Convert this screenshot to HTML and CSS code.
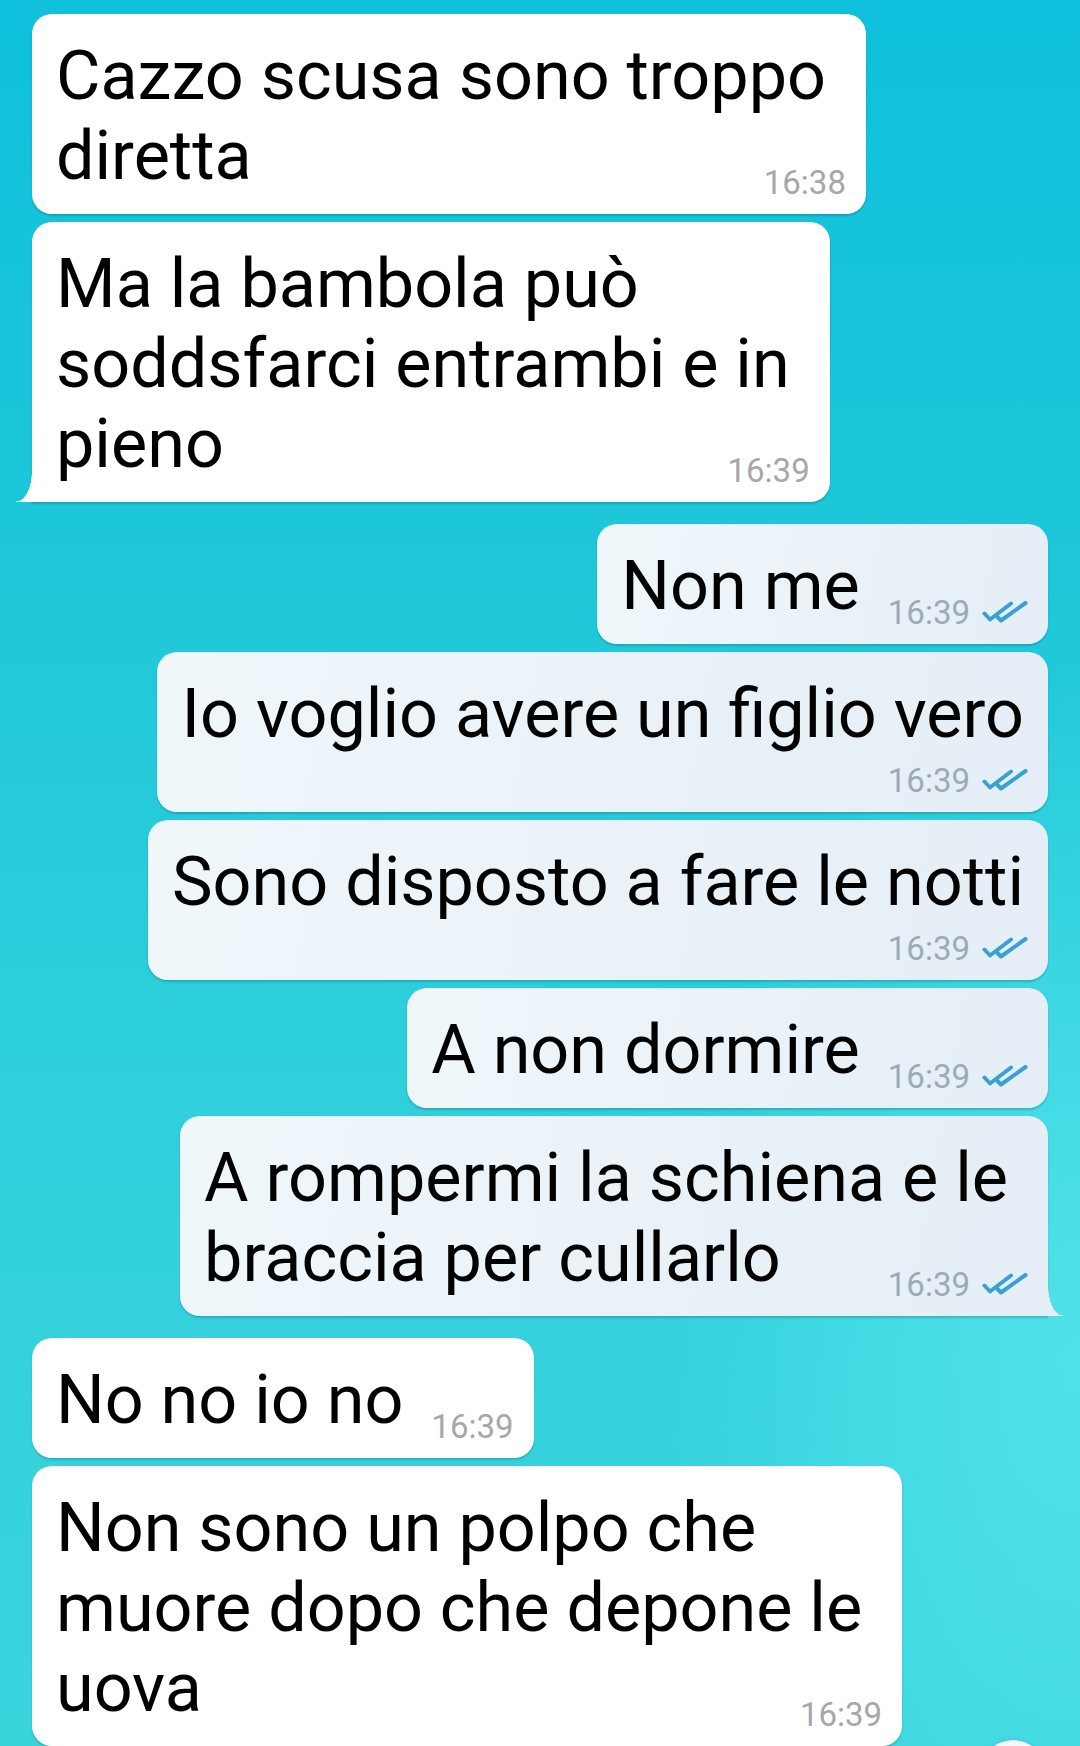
FILE: index.html
```html
<!DOCTYPE html>
<html lang="it">
  <head>
    <meta charset="UTF-8" />
    <meta name="viewport" content="width=device-width, initial-scale=1.0" />
    <title>Chat</title>
    <link rel="stylesheet" href="styles.css">
  </head>
  <body>
    <div class="chat">
      <div class="bubble in multi">
        <p class="text">Cazzo scusa sono troppo<br>diretta</p>
        <div class="meta"><span class="time">16:38</span></div>
      </div>
      <div class="bubble in multi tail">
        <p class="text">Ma la bambola può<br>soddsfarci entrambi e in<br>pieno</p>
        <div class="meta"><span class="time">16:39</span></div>
      </div>

      <div class="bubble out inline group-start">
        <p class="text">Non me</p>
        <div class="meta">
          <span class="time">16:39</span>
          <svg class="ticks" viewBox="0 0 46 22"><path d="M2.5 12.5 L8 18.5 L29 2.5 M15 15.5 L19 19.5 L43.5 2" /></svg>
        </div>
      </div>
      <div class="bubble out">
        <p class="text">Io voglio avere un figlio vero</p>
        <div class="meta">
          <span class="time">16:39</span>
          <svg class="ticks" viewBox="0 0 46 22"><path d="M2.5 12.5 L8 18.5 L29 2.5 M15 15.5 L19 19.5 L43.5 2" /></svg>
        </div>
      </div>
      <div class="bubble out">
        <p class="text">Sono disposto a fare le notti</p>
        <div class="meta">
          <span class="time">16:39</span>
          <svg class="ticks" viewBox="0 0 46 22"><path d="M2.5 12.5 L8 18.5 L29 2.5 M15 15.5 L19 19.5 L43.5 2" /></svg>
        </div>
      </div>
      <div class="bubble out inline">
        <p class="text">A non dormire</p>
        <div class="meta">
          <span class="time">16:39</span>
          <svg class="ticks" viewBox="0 0 46 22"><path d="M2.5 12.5 L8 18.5 L29 2.5 M15 15.5 L19 19.5 L43.5 2" /></svg>
        </div>
      </div>
      <div class="bubble out multi tail">
        <p class="text">A rompermi la schiena e le<br>braccia per cullarlo</p>
        <div class="meta">
          <span class="time">16:39</span>
          <svg class="ticks" viewBox="0 0 46 22"><path d="M2.5 12.5 L8 18.5 L29 2.5 M15 15.5 L19 19.5 L43.5 2" /></svg>
        </div>
      </div>

      <div class="bubble in inline group-start">
        <p class="text">No no io no</p>
        <div class="meta"><span class="time">16:39</span></div>
      </div>
      <div class="bubble in multi">
        <p class="text">Non sono un polpo che<br>muore dopo che depone le<br>uova</p>
        <div class="meta"><span class="time">16:39</span></div>
      </div>
    </div>
    <div class="scroll-down"></div>
  </body>
</html>
```

FILE: styles.css
```css
body {
  margin: 0;
  width: 1080px;
  height: 1746px;
  overflow: hidden;
  position: relative;
  font-family: Roboto, "Noto Sans", sans-serif;
  background:
    radial-gradient(ellipse 420px 700px at 100% 78%, rgba(90, 232, 240, 0.75), rgba(90, 232, 240, 0) 100%),
    linear-gradient(180deg, #0fc0dc 0%, #1fc8d9 35%, #33d1dc 70%, #3ad4dd 100%);
}
.chat {
  display: flex;
  flex-direction: column;
  gap: 8px;
  padding: 14px 32px 0;
}
.group-start {
  margin-top: 14px;
}
.bubble {
  position: relative;
  display: flex;
  flex-direction: column;
  padding: 22px 20px 11px 24px;
  border-radius: 20px;
  box-shadow: 0 2px 2px rgba(0, 60, 70, 0.22);
}
.bubble.in {
  align-self: flex-start;
  background: #ffffff;
}
.bubble.out {
  align-self: flex-end;
  background: linear-gradient(100deg, #f0f7fb 0%, #e5eef6 100%);
}
.bubble.inline {
  flex-direction: row;
  align-items: flex-end;
}
.text {
  margin: 0 0 7px;
  padding-right: 4px;
  font-size: 68.3px;
  line-height: 80px;
  color: #000;
}
.multi .text {
  padding-right: 20px;
}
.meta {
  align-self: flex-end;
  display: flex;
  gap: 12px;
  height: 40px;
  line-height: 40px;
  font-size: 33px;
}
.multi .meta {
  margin-top: -40px;
}
.inline .meta {
  margin-left: 24px;
}
.in .time {
  color: #a7a7a7;
}
.out .time {
  color: #9aabb9;
}
.ticks {
  width: 46px;
  height: 22px;
  margin-top: 8px;
  fill: none;
  stroke: #36a3d2;
  stroke-width: 4;
  stroke-linecap: round;
  stroke-linejoin: round;
}
.in.tail {
  border-bottom-left-radius: 0;
}
.in.tail::before {
  content: "";
  position: absolute;
  left: -16px;
  bottom: 0;
  width: 16px;
  height: 30px;
  background: radial-gradient(16px 30px at 0 0, rgba(255, 255, 255, 0) 97%, #ffffff 100%);
}
.out.tail {
  border-bottom-right-radius: 0;
}
.out.tail::after {
  content: "";
  position: absolute;
  right: -15px;
  bottom: 0;
  width: 15px;
  height: 30px;
  background: radial-gradient(15px 30px at 100% 0, rgba(229, 238, 246, 0) 97%, #e5eef6 100%);
}
.scroll-down {
  position: absolute;
  left: 980px;
  top: 1740px;
  width: 66px;
  height: 66px;
  border-radius: 50%;
  background: #f4f8f9;
  box-shadow: 0 0 3px rgba(0, 0, 0, 0.2);
}
```
